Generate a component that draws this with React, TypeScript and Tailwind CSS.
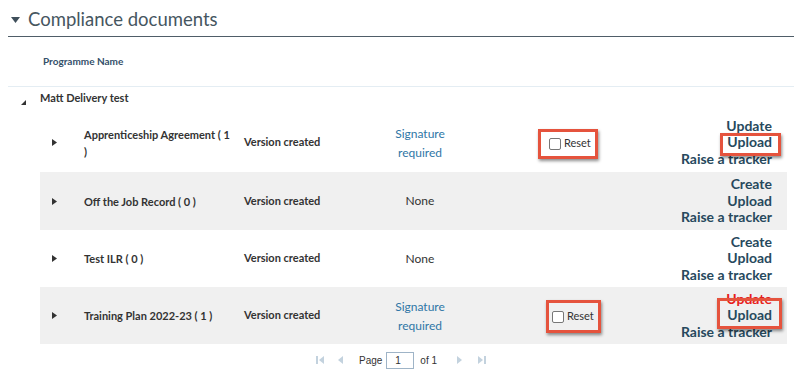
import React from "react";

const body = { fontFamily: "Lato, 'DejaVu Sans', sans-serif" } as React.CSSProperties;

function RightTri() {
  return (
    <svg width="5" height="7" viewBox="0 0 5 7" className="block">
      <path d="M0 0 L5 3.5 L0 7 Z" fill="#333" />
    </svg>
  );
}

function ResetBox({ className }: { className: string }) {
  return (
    <div className={`inline-flex items-center border-[3px] border-[#e5533d] shadow-[1px_2px_3px_rgba(0,0,0,0.45)] ${className}`}>
      <span className="w-[12px] h-[12px] border border-[#777] rounded-[2px] bg-white mr-[3px]" />
      <span className="text-[11px] text-[#333]">Reset</span>
    </div>
  );
}

type Row = {
  name: React.ReactNode;
  status: "sig" | "none";
  reset: boolean;
  first: "Update" | "Create";
  red?: boolean;
  gray?: boolean;
  h: string;
  resetCls?: string;
};

const rows: Row[] = [
  { name: <>Apprenticeship Agreement ( 1<br />)</>, status: "sig", reset: true, first: "Update", h: "h-[59px]", resetCls: "ml-[58px] w-[60px] h-[30px] pl-[8px] mt-[2px]" },
  { name: "Off the Job Record ( 0 )", status: "none", reset: false, first: "Create", gray: true, h: "h-[58px]" },
  { name: "Test ILR ( 0 )", status: "none", reset: false, first: "Create", h: "h-[57px]" },
  { name: "Training Plan 2022-23 ( 1 )", status: "sig", reset: true, first: "Update", red: true, gray: true, h: "h-[57px]", resetCls: "ml-[66px] w-[55px] h-[33px] pl-[3px] mt-[2px]" },
];

export default function App() {
  return (
    <div className="w-[800px] h-[380px] bg-white pl-[8px] pr-[6px]" style={body}>
      <div className="h-[37px] flex items-center border-b border-[#4f5d68]">
        <svg width="9" height="6" viewBox="0 0 9 6" className="ml-[3px] mr-[8px] mt-[4px]">
          <path d="M0 0 L9 0 L4.5 6 Z" fill="#3f4f5b" />
        </svg>
        <span className="text-[18.5px] text-[#46565f] mt-[3px]">Compliance documents</span>
      </div>
      <div className="h-[50px] flex items-center border-b border-[#e4edf3] pl-[35px]">
        <span className="text-[10px] font-bold text-[#34506a]">Programme Name</span>
      </div>
      <div className="h-[26px] flex items-center">
        <svg width="5" height="5" viewBox="0 0 5 5" className="ml-[13px] mt-[5px]">
          <path d="M5 0 L5 5 L0 5 Z" fill="#333" />
        </svg>
        <span className="ml-[14px] text-[11px] font-bold text-[#333] mb-[3px]">Matt Delivery test</span>
      </div>
      <div className="ml-[32px] mr-[7px]">
        {rows.map((r, i) => (
          <div key={i} className={`${r.h} flex items-center ${r.gray ? "bg-[#f0f0f0]" : "bg-white"}`}>
            <div className="w-[44px] pl-[12px]"><RightTri /></div>
            <div className="w-[160px] text-[11px] font-bold text-[#333] leading-[17px] pr-[8px]">{r.name}</div>
            <div className="w-[116px] text-[11px] font-bold text-[#333]">Version created</div>
            <div className="w-[120px] text-center">
              {r.status === "sig" ? (
                <div className="text-[12px] text-[#2f76a6] leading-[19px]">Signature<br />required</div>
              ) : (
                <div className="text-[12px] text-[#333]">None</div>
              )}
            </div>
            <div className="w-[150px]">
              {r.reset && <ResetBox className={r.resetCls || ""} />}
            </div>
            <div className="flex-1 pr-[15px] flex justify-end">
              <div className="relative text-right text-[14px] font-bold leading-[16.5px] text-[#27495d]">
                <div className={r.red ? "text-[#e8201c]" : ""}>{r.first}</div>
                <div>Upload</div>
                <div>Raise a tracker</div>
                {r.reset && (
                  <div className={`absolute border-[3px] border-[#e5533d] shadow-[1px_2px_3px_rgba(0,0,0,0.45)] ${r.red ? "w-[65px] right-[-10px] top-[7px] h-[31px]" : "w-[61px] right-[-9px] top-[15px] h-[23px]"}`} />
                )}
              </div>
            </div>
          </div>
        ))}
      </div>
      <div className="h-[32px] flex items-center justify-center text-[10px] text-[#333]">
        <svg width="10" height="10" viewBox="0 0 10 10" className="mr-[12px]"><path d="M1 1 H3 V9 H1 Z M9 1 V9 L4 5 Z" fill="#c3d2de" /></svg>
        <svg width="8" height="10" viewBox="0 0 8 10" className="mr-[14px]"><path d="M6 1 V9 L1 5 Z" fill="#c3d2de" /></svg>
        <span className="mr-[4px]" style={{ fontFamily: "'Liberation Sans', sans-serif" }}>Page</span>
        <span className="w-[28px] h-[17px] border border-[#9fb4c7] bg-white text-[10px] pl-[8px] leading-[15px] mr-[6px]" style={{ fontFamily: "'Liberation Sans', sans-serif" }}>1</span>
        <span className="mr-[18px]" style={{ fontFamily: "'Liberation Sans', sans-serif" }}>of 1</span>
        <svg width="8" height="10" viewBox="0 0 8 10" className="mr-[14px]"><path d="M2 1 V9 L7 5 Z" fill="#c3d2de" /></svg>
        <svg width="10" height="10" viewBox="0 0 10 10"><path d="M1 1 V9 L6 5 Z M7 1 H9 V9 H7 Z" fill="#c3d2de" /></svg>
      </div>
    </div>
  );
}
